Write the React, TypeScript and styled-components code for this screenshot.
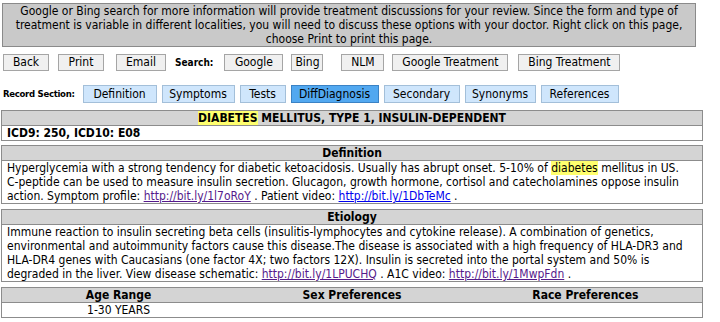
import { styled, createGlobalStyle } from 'styled-components';

const GlobalStyle = createGlobalStyle`
	body {
		margin: 0;
		background: #ffffff;
		color: #000000;
		font-family: 'DejaVu Sans Condensed', 'DejaVu Sans', Verdana, sans-serif;
		font-size: 12px;
		line-height: 14px;
	}
`;

const Page = styled.div`
	width: 702px;
	padding: 3px 0 0 1px;
`;

const Notice = styled.div`
	box-sizing: border-box;
	width: 694px;
	margin-left: 1px;
	background: #c9c9c9;
	border: 1px solid #8a8a8a;
	text-align: center;
`;

const ButtonRow = styled.div`
	display: flex;
	align-items: center;
	margin-top: 7px;
	height: 17px;
`;

const Button = styled.div<{ $w: number; $ml: number }>`
	box-sizing: border-box;
	width: ${(p) => p.$w}px;
	margin-left: ${(p) => p.$ml}px;
	height: 17px;
	line-height: 15px;
	text-align: center;
	background: #f0f0f0;
	border: 1px solid #a5a5a5;
	white-space: nowrap;
`;

const Label = styled.span<{ $ml: number; $mr?: number; $tight?: boolean }>`
	margin-left: ${(p) => p.$ml}px;
	margin-right: ${(p) => p.$mr || 0}px;
	font-size: ${(p) => (p.$tight ? '9.5px' : '10px')};
	letter-spacing: ${(p) => (p.$tight ? '-0.3px' : '0')};
	font-weight: bold;
	white-space: nowrap;
`;

const TabRow = styled.div`
	display: flex;
	align-items: center;
	gap: 5px;
	margin-top: 14px;
	height: 18px;
`;

const Tab = styled.div<{ $w: number; $active?: boolean }>`
	box-sizing: border-box;
	width: ${(p) => p.$w}px;
	height: 18px;
	line-height: 16px;
	text-align: center;
	background: ${(p) => (p.$active ? '#52a8f0' : '#cfe6fc')};
	border: 1px solid ${(p) => (p.$active ? '#3b82c4' : '#a3bfd9')};
	white-space: nowrap;
`;

const Table = styled.table<{ $mt: number }>`
	width: 702px;
	margin-top: ${(p) => p.$mt}px;
	border-collapse: collapse;
	border: 1px solid #8c8c8c;
	font-size: 12px;
	line-height: 14px;
`;

const Head = styled.th<{ $w?: string }>`
	padding: 0;
	height: 14px;
	background: #d4d4d4;
	border-bottom: 1px solid #8c8c8c;
	font-weight: bold;
	text-align: center;
	width: ${(p) => p.$w || 'auto'};
`;

const Cell = styled.td<{ $center?: boolean; $bold?: boolean }>`
	padding: 0 5px;
	height: 14px;
	text-align: ${(p) => (p.$center ? 'center' : 'left')};
	font-weight: ${(p) => (p.$bold ? 'bold' : 'normal')};
	white-space: nowrap;
`;

const Mark = styled.span`
	background: #ffff6e;
`;

const Link = styled.a<{ $visited?: boolean }>`
	color: ${(p) => (p.$visited ? '#551a8b' : '#0000ee')};
	text-decoration: underline;
`;

const buttons = [
	{ text: 'Back', w: 46, ml: 2 },
	{ text: 'Print', w: 46, ml: 9 },
	{ text: 'Email', w: 50, ml: 12 },
];

const searchButtons = [
	{ text: 'Google', w: 59, ml: 11 },
	{ text: 'Bing', w: 32, ml: 8 },
	{ text: 'NLM', w: 43, ml: 18 },
	{ text: 'Google Treatment', w: 116, ml: 8 },
	{ text: 'Bing Treatment', w: 102, ml: 10 },
];

const tabs = [
	{ text: 'Definition', w: 74 },
	{ text: 'Symptoms', w: 73 },
	{ text: 'Tests', w: 46 },
	{ text: 'DiffDiagnosis', w: 88, active: true },
	{ text: 'Secondary', w: 76 },
	{ text: 'Synonyms', w: 71 },
	{ text: 'References', w: 78 },
];

const App = () => {
	return (
		<Page>
			<GlobalStyle />
			<Notice>
				Google or Bing search for more information will provide treatment discussions for your review. Since the form and type of
				<br />
				treatment is variable in different localities, you will need to discuss these options with your doctor. Right click on this page,
				<br />
				choose Print to print this page.
			</Notice>

			<ButtonRow>
				{buttons.map((b) => (
					<Button key={b.text} $w={b.w} $ml={b.ml}>
						{b.text}
					</Button>
				))}
				<Label $ml={9}>Search:</Label>
				{searchButtons.map((b) => (
					<Button key={b.text} $w={b.w} $ml={b.ml}>
						{b.text}
					</Button>
				))}
			</ButtonRow>

			<TabRow>
				<Label $ml={2} $mr={3} $tight>
					Record Section:
				</Label>
				{tabs.map((t) => (
					<Tab key={t.text} $w={t.w} $active={t.active}>
						{t.text}
					</Tab>
				))}
			</TabRow>

			<Table $mt={7}>
				<tbody>
					<tr>
						<Head>
							<Mark>DIABETES</Mark> MELLITUS, TYPE 1, INSULIN-DEPENDENT
						</Head>
					</tr>
					<tr>
						<Cell $bold>ICD9: 250, ICD10: E08</Cell>
					</tr>
				</tbody>
			</Table>

			<Table $mt={4}>
				<tbody>
					<tr>
						<Head>Definition</Head>
					</tr>
					<tr>
						<Cell>
							Hyperglycemia with a strong tendency for diabetic ketoacidosis. Usually has abrupt onset. 5-10% of{' '}
							<Mark>diabetes</Mark> mellitus in US.
							<br />
							C-peptide can be used to measure insulin secretion. Glucagon, growth hormone, cortisol and catecholamines oppose insulin
							<br />
							action. Symptom profile: <Link $visited href='#'>http://bit.ly/1l7oRoY</Link> . Patient video:{' '}
							<Link href='#'>http://bit.ly/1DbTeMc</Link> .
						</Cell>
					</tr>
				</tbody>
			</Table>

			<Table $mt={5}>
				<tbody>
					<tr>
						<Head>Etiology</Head>
					</tr>
					<tr>
						<Cell>
							Immune reaction to insulin secreting beta cells (insulitis-lymphocytes and cytokine release). A combination of genetics,
							<br />
							environmental and autoimmunity factors cause this disease.The disease is associated with a high frequency of HLA-DR3 and
							<br />
							HLA-DR4 genes with Caucasians (one factor 4X; two factors 12X). Insulin is secreted into the portal system and 50% is
							<br />
							degraded in the liver. View disease schematic: <Link $visited href='#'>http://bit.ly/1LPUCHQ</Link> . A1C video:{' '}
							<Link $visited href='#'>http://bit.ly/1MwpFdn</Link> .
						</Cell>
					</tr>
				</tbody>
			</Table>

			<Table $mt={5}>
				<tbody>
					<tr>
						<Head $w='33.3%'>Age Range</Head>
						<Head $w='33.3%'>Sex Preferences</Head>
						<Head $w='33.3%'>Race Preferences</Head>
					</tr>
					<tr>
						<Cell $center>1-30 YEARS</Cell>
						<Cell $center></Cell>
						<Cell $center></Cell>
					</tr>
				</tbody>
			</Table>
		</Page>
	);
};

export default App;
